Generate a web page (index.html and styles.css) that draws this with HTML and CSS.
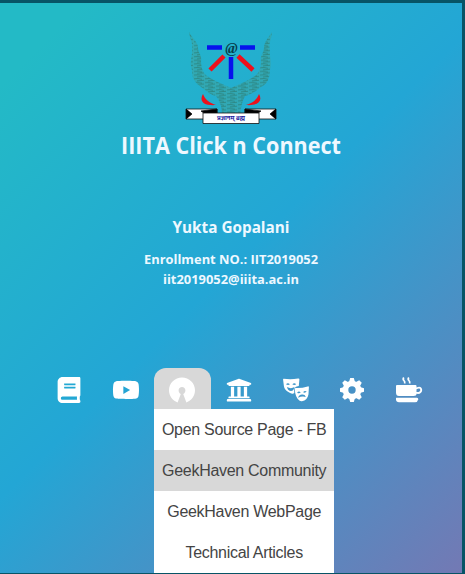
FILE: index.html
```
<!DOCTYPE html>
<html lang="en">
<head>
<meta charset="utf-8">
<title>IIITA Click n Connect</title>
<link rel="stylesheet" href="styles.css">
</head>
<body>
<main class="page">
  <header class="head">
    <svg class="crest" viewBox="0 0 96 96">
      <defs>
        <pattern id="feather" width="11" height="3.700" patternUnits="userSpaceOnUse">
          <path d="M0 .8Q4 0 8 1.200M3 2.700L10 2.100" fill="none" stroke="#2a7468" stroke-width=".6"/>
        </pattern>
        <path id="wings" d="M6 2C9 8 15 12 15 18C15 23 19 25 18 31C18 38 20 43 24 46C31 51 40 54 48 58C56 54 65 51 72 46C76 43 78 38 78 31C77 25 81 23 81 18C81 12 86 7 89 2C89 8 85 13 87 20C86 26 89 31 87 40C87 48 84 54 78 57C72 62 67 65 62 66C59 71 58 77 57 84H39C39 77 37 71 33 66C28 65 23 61 17 56C11 52 9 47 9 40C6 31 10 25 9 19C10 12 7 9 6 2Z"/>
      </defs>
      <use href="#wings" fill="#3ba3a2" fill-opacity=".6"/>
      <use href="#wings" fill="url(#feather)"/>
      <g stroke-width="4.500">
        <path stroke="#0712ed" d="M24 17.500H39M57 17.500H72M48 27V49"/>
        <path stroke="#ee101c" d="M41 26L27 40M55 26L70 40"/>
      </g>
      <text class="at" x="48.500" y="23" text-anchor="middle">@</text>
      <path fill="#ec111c" d="M20 64C16 71 20 76 33 75C27 73 22 70 20 64ZM76 64C80 71 75 76 63 75C69 73 74 70 76 64Z"/>
      <g stroke="#111" stroke-width=".8">
        <path fill="#fff" d="M3 79H34V89H3L8 84ZM93 79H62V89H93L88 84Z"/>
        <path fill="#000" d="M3 79L9 84L3 89ZM93 79L87 84L93 89ZM18 81L34 79V84H22ZM78 81L62 79V84H74Z"/>
        <path fill="#fff" d="M20 83H76V93.500H20Z"/>
      </g>
      <text class="motto" x="48" y="90" text-anchor="middle" textLength="28" lengthAdjust="spacingAndGlyphs">प्रज्ञानम् ब्रह्म</text>
    </svg>
    <h1 class="title"><svg class="line" viewBox="0 0 240 36"><text x="120" y="26" text-anchor="middle" textLength="220" lengthAdjust="spacingAndGlyphs">IIITA Click n Connect</text></svg></h1>
  </header>
  <section class="profile">
    <svg class="name" viewBox="0 0 240 26"><text x="120" y="19" text-anchor="middle" textLength="117" lengthAdjust="spacingAndGlyphs">Yukta Gopalani</text></svg>
    <svg class="detail" viewBox="0 0 240 20"><text x="120" y="14" text-anchor="middle" textLength="174" lengthAdjust="spacingAndGlyphs">Enrollment NO.: IIT2019052</text></svg>
    <svg class="detail" viewBox="0 0 240 20"><text x="120" y="14" text-anchor="middle" textLength="136" lengthAdjust="spacingAndGlyphs">iit2019052@iiita.ac.in</text></svg>
  </section>
  <nav class="nav">
    <div class="tab"><svg class="icon" viewBox="-32 0 512 512"><path d="M448 360V24c0-13.300-10.700-24-24-24H96C43 0 0 43 0 96v320c0 53 43 96 96 96h328c13.300 0 24-10.700 24-24v-16c0-7.500-3.500-14.300-8.900-18.700-4.200-15.400-4.200-59.300 0-74.700 5.400-4.300 8.900-11.100 8.900-18.600zM128 134c0-3.300 2.700-6 6-6h212c3.300 0 6 2.700 6 6v20c0 3.300-2.700 6-6 6H134c-3.300 0-6-2.700-6-6v-20zm0 64c0-3.300 2.700-6 6-6h212c3.300 0 6 2.700 6 6v20c0 3.300-2.700 6-6 6H134c-3.300 0-6-2.700-6-6v-20zm253.400 250H96c-17.700 0-32-14.300-32-32 0-17.600 14.400-32 32-32h285.400c-1.900 17.100-1.900 46.900 0 64z"/></svg></div>
    <div class="tab"><svg class="icon" viewBox="15 -17 546 546"><path d="M549.655 124.083c-6.281-23.650-24.787-42.276-48.284-48.597C458.781 64 288 64 288 64S117.220 64 74.629 75.486c-23.497 6.322-42.003 24.947-48.284 48.597-11.412 42.867-11.412 132.305-11.412 132.305s0 89.438 11.412 132.305c6.281 23.650 24.787 41.500 48.284 47.821C117.220 448 288 448 288 448s170.780 0 213.371-11.486c23.497-6.321 42.003-24.171 48.284-47.821 11.412-42.867 11.412-132.305 11.412-132.305s0-89.438-11.412-132.305zm-317.510 213.508V175.185l142.739 81.205-142.739 81.201z"/></svg></div>
    <div class="tab open">
      <svg class="icon" viewBox="0 0 26 26"><path d="M13 .5C5.900.5 0 6.200 0 13.200C0 18.700 3.400 23.500 8.600 25.400L11.800 16.900C10.400 16.200 9.600 15 9.600 13.400C9.600 11.400 11.100 9.900 13 9.900S16.400 11.400 16.400 13.400C16.400 15 15.600 16.200 14.200 16.900L17.400 25.400C22.600 23.500 26 18.700 26 13.200C26 6.200 20.100.5 13 .5Z"/></svg>
      <div class="menu">
        <div class="item">Open Source Page - FB</div>
        <div class="item active">GeekHaven Community</div>
        <div class="item">GeekHaven WebPage</div>
        <div class="item">Technical Articles</div>
      </div>
    </div>
    <div class="tab"><svg class="icon" viewBox="0 0 512 512"><path d="M496 128v16a8 8 0 0 1-8 8h-24v12c0 6.627-5.373 12-12 12H60c-6.627 0-12-5.373-12-12v-12H24a8 8 0 0 1-8-8v-16a8 8 0 0 1 4.941-7.392l232-88a7.996 7.996 0 0 1 6.118 0l232 88A8 8 0 0 1 496 128zm-24 304H40c-13.255 0-24 10.745-24 24v16a8 8 0 0 0 8 8h464a8 8 0 0 0 8-8v-16c0-13.255-10.745-24-24-24zM96 192v192H60c-6.627 0-12 5.373-12 12v20h416v-20c0-6.627-5.373-12-12-12h-36V192h-64v192h-64V192h-64v192h-64V192H96z"/></svg></div>
    <div class="tab"><svg class="icon" viewBox="0 0 26 26"><path fill-rule="evenodd" d="M.6 1.700Q8 2.800 15.100 1.400Q16.500 1.200 16.400 2.600L15.800 8.900C12.500 9.200 10.800 11 11.200 13L11.300 16Q10 17 8.500 16.400C4.800 15.200 1.500 13 .9 9L.1 2.800Q0 1.700.6 1.700ZM3 7.200Q5 5.200 6.900 7.300Q5 8.500 3 7.200ZM9.300 7.300Q11.300 5.200 13.200 7.200Q11.300 8.500 9.300 7.300ZM4 10Q8 12.300 11.500 10Q10.700 14.100 8 14.100Q4.900 14.100 4 10Z"/><path fill-rule="evenodd" d="M12.300 10.900Q18.500 11.300 24.700 9.400Q25.900 9.100 25.900 10.200L25.500 17.200C25 21 22.500 23.500 19 24.200Q17.700 24.500 16.300 23.500C13.500 21.300 12 17.500 11.800 12.300ZM14.100 15.700Q16 13.600 17.700 15.600Q16 17 14.100 15.700ZM20.100 15.200Q21.700 12.900 23.700 14.600Q22.200 16.300 20.100 15.200ZM15 20.800Q16.400 17.500 19 17.600Q21.900 17.300 22.800 20Q19 18.900 15 20.800Z"/></svg></div>
    <div class="tab"><svg class="icon" viewBox="0 0 26 26"><path id="teeth" d="M10 5L11.200 1H14.800L16 5ZM10 21L11.200 25H14.800L16 21Z"/><use href="#teeth" transform="rotate(45 13 13)"/><use href="#teeth" transform="rotate(90 13 13)"/><use href="#teeth" transform="rotate(135 13 13)"/><circle cx="13" cy="13" r="6.500" fill="none" stroke="#fff" stroke-width="5.600"/></svg></div>
    <div class="tab"><svg class="icon" viewBox="0 0 26 26"><path d="M1 8Q0 8 0 9V15.500Q0 19 3 19H17.500Q20.500 19 20.500 16.800C24 17.500 26.200 15.500 26.200 13C26.200 10.200 23.700 8.700 20.500 10.500V9Q20.500 8 19.500 8ZM20.500 12.300C23 10.800 24.300 11.500 24.300 13C24.300 14.600 22.700 15.300 20.500 15Z" fill-rule="evenodd"/><path d="M.3 20.800H21Q22.500 20.800 22.200 22.500Q21.600 25.200 19 25.200H3Q.2 25.200 0 22.500V21Z"/><path d="M7.800.5C5.400 3.800 10 3 8.600 6.500M12.800.5C10.400 3.800 15 3 13.600 6.500" fill="none" stroke="#fff" stroke-width="1.700"/></svg></div>
  </nav>
</main>
</body>
</html>
```
FILE: styles.css
```
* { box-sizing: border-box; }
body {
  margin: 0;
  height: 574px;
  padding: 3px 3px 1px 0;
  background: #075466;
  overflow: hidden;
}
.page {
  height: 570px;
  background: linear-gradient(135deg, #23bac6 0%, #23bac6 8%, #23a6d5 48%, #7379b4 100%);
  display: flex;
  flex-direction: column;
  align-items: center;
}
.head, .profile {
  display: flex;
  flex-direction: column;
  align-items: center;
}
svg { display: block; }
.crest {
  width: 96px;
  height: 96px;
  margin-top: 27px;
}
.at { font: bold italic 15px "Liberation Serif", serif; fill: #063e4c; }
.motto { font: bold 6px "Noto Sans", sans-serif; fill: #2020a0; }
.title { margin: 2px 0 0; }
.line, .name, .detail {
  width: 240px;
  font-family: "Open Sans", "Noto Sans", sans-serif;
  font-weight: 700;
  fill: #eef8ff;
}
.line { height: 36px; font-size: 22.500px; }
.profile { margin-top: 48px; }
.name { height: 26px; font-size: 16px; margin-top: 2px; margin-bottom: 10px; }
.detail { height: 20px; font-size: 12.500px; }
.nav {
  display: flex;
  align-self: flex-start;
  margin: 78px 0 0 41px;
}
.tab {
  width: 56.600px;
  height: 41px;
  display: flex;
  align-items: center;
  justify-content: center;
  position: relative;
  padding-top: 2px;
}
.open {
  background: #d8d8d8;
  border-radius: 12px 12px 0 0;
}
.icon {
  width: 26px;
  height: 26px;
  fill: #fff;
  overflow: visible;
}
.menu {
  position: absolute;
  top: 41px;
  left: 0;
  width: 180px;
  background: #fff;
}
.item {
  height: 41px;
  line-height: 41px;
  text-align: center;
  white-space: nowrap;
  color: #444;
  font-family: "Liberation Sans", Arial, sans-serif;
  font-size: 16px;
  letter-spacing: -0.300px;
}
.active { background: #d8d8d8; }
```
